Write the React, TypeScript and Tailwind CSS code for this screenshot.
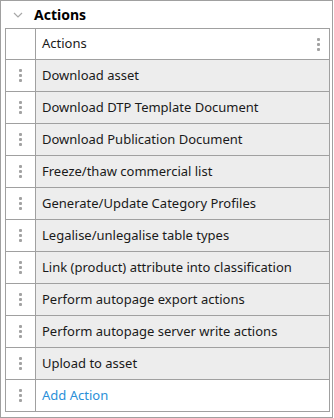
import React from 'react';

const actions = [
  'Download asset',
  'Download DTP Template Document',
  'Download Publication Document',
  'Freeze/thaw commercial list',
  'Generate/Update Category Profiles',
  'Legalise/unlegalise table types',
  'Link (product) attribute into classification',
  'Perform autopage export actions',
  'Perform autopage server write actions',
  'Upload to asset',
];

function Dots() {
  return (
    <div className="flex flex-col items-center gap-[2px]">
      <span className="block w-[3px] h-[3px] bg-[#a2a2a2] rounded-[1px]" />
      <span className="block w-[3px] h-[3px] bg-[#a2a2a2] rounded-[1px]" />
      <span className="block w-[3px] h-[3px] bg-[#a2a2a2] rounded-[1px]" />
    </div>
  );
}

export default function App() {
  return (
    <div
      className="w-[333px] h-[418px] bg-white border border-[#a0a0a0] text-[13px] text-[#1a1a1a]"
      style={{ fontFamily: '"Noto Sans", "Liberation Sans", Arial, sans-serif' }}>
      {/* Section header */}
      <div className="h-[27px] flex items-center pl-[12px]">
        <svg width="10" height="6" viewBox="0 0 10 6" className="mr-[11px]">
          <path d="M1 1 L5 5 L9 1" fill="none" stroke="#a8a8a8" strokeWidth="1.2" />
        </svg>
        <span className="font-bold text-[14px] text-black">Actions</span>
      </div>

      {/* Table */}
      <div className="ml-[4px] w-[325px] border border-[#a0a0a0]">
        <div className="flex h-[31px] border-b border-[#a0a0a0]">
          <div className="w-[30px] border-r border-[#a0a0a0]" />
          <div className="flex-1 flex items-center pl-[6px] pr-[9px] justify-between">
            <span>Actions</span>
            <Dots />
          </div>
        </div>
        {actions.map((a) =>
        <div key={a} className="flex h-[32px] border-b border-[#a0a0a0]">
            <div className="w-[30px] border-r border-[#a0a0a0] flex items-center justify-center">
              <Dots />
            </div>
            <div className="flex-1 flex items-center pl-[6px] bg-[#ededed]">{a}</div>
          </div>
        )}
        <div className="flex h-[31px]">
          <div className="w-[30px] border-r border-[#a0a0a0] flex items-center justify-center">
            <Dots />
          </div>
          <div className="flex-1 flex items-center pl-[6px] text-[#2a8fd8]">Add Action</div>
        </div>
      </div>
    </div>
  );
}
